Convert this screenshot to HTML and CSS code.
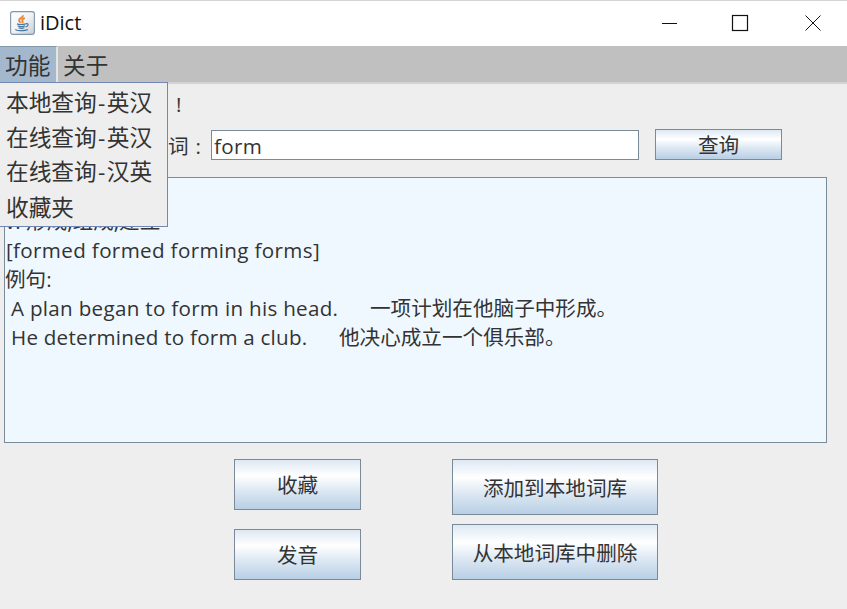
FILE: index.html
```html
<!DOCTYPE html>
<html lang="zh-CN">
<head>
<meta charset="utf-8">
<title>iDict</title>
<link rel="stylesheet" href="styles.css">
</head>
<body>
<div class="window">
  <header class="titlebar">
    <svg class="logo" width="25" height="24" viewBox="0 0 25 24">
      <defs><linearGradient id="tile" x1="0" y1="0" x2="1" y2="1"><stop offset="0" stop-color="#fff"/><stop offset=".5" stop-color="#f0f2f5"/><stop offset="1" stop-color="#c3ccd5"/></linearGradient></defs>
      <rect x=".6" y=".6" width="23.8" height="22.8" rx="2.5" fill="url(#tile)" stroke="#8295aa" stroke-width="1.1"/>
      <path d="M13 4.200c.5 2.300-4.200 2.900-4 5.200 .1 1.100 1.300 1.800 1.900 2.400M14.800 7c-2.200.8-3.200 1.700-2.300 2.900.5.700.3 1.300-.3 2" fill="none" stroke="#e8893c" stroke-width="1.900"/>
      <path d="M7 12.900c2 .8 6 .6 8.800-.1M7.800 14.900c2 .8 5.500.7 7.200 0M8.600 16.800c1.700.6 4.200.6 5.800 0M15.800 12.800c3-.8 3.200 2.200-.3 3.200M5.800 18.300c-1 1.600 9.500 1.900 12 .1" fill="none" stroke="#4a789e" stroke-width="1.200"/>
    </svg>
    <h1 class="title">iDict</h1>
    <svg class="controls" width="162" height="20" viewBox="0 0 162 20" fill="none" stroke="#111">
      <path d="M2 10.500h15"/>
      <rect x="72.500" y="2.500" width="15" height="15" stroke-width="1.200"/>
      <path d="M145.500 2.500l15 15M160.500 2.500l-15 15"/>
    </svg>
  </header>
  <nav class="menubar">
    <div class="menu open"><span>功能</span>
      <ul class="dropdown">
        <li>本地查询<span class="dash">-</span>英汉</li>
        <li>在线查询<span class="dash">-</span>英汉</li>
        <li>在线查询<span class="dash">-</span>汉英</li>
        <li>收藏夹</li>
      </ul>
    </div>
    <div class="menu"><span>关于</span></div>
  </nav>
  <main class="content">
    <p class="greeting">!</p>
    <form class="search">
      <label class="label" for="word">词<span class="colon">:</span></label>
      <input class="field" id="word" type="text" value="form">
      <button class="button find" type="button">查询</button>
    </form>
    <section class="result">
      <p class="line">v. 形成,组成,建立</p>
      <p class="line english">[formed formed forming forms]</p>
      <p class="line">例句:</p>
      <p class="line example"><span class="first">A plan began to form in his head.</span><span>一项计划在他脑子中形成。</span></p>
      <p class="line example"><span class="second">He determined to form a club.</span><span>他决心成立一个俱乐部。</span></p>
    </section>
    <div class="actions">
      <div class="column narrow">
        <button class="button" type="button">收藏</button>
        <button class="button" type="button">发音</button>
      </div>
      <div class="column wide">
        <button class="button" type="button">添加到本地词库</button>
        <button class="button" type="button">从本地词库中删除</button>
      </div>
    </div>
  </main>
</div>
</body>
</html>
```
FILE: styles.css
```css
* { box-sizing: border-box; }
body { margin: 0; }
p, h1, ul { margin: 0; padding: 0; }

.window {
  width: 847px;
  height: 609px;
  overflow: hidden;
  background: #eee;
  color: #333;
  font: 20.6px/29px "Open Sans", "Noto Sans CJK SC", sans-serif;
}

.titlebar {
  height: 46px;
  display: flex;
  align-items: center;
  padding: 0 25px 0 10px;
  background: #fff;
  border-top: 1px solid #d5d5d5;
}
.logo { margin-top: -2px; }
.title { margin: -2px 0 0 5px; font-size: 20px; font-weight: 400; color: #111; }
.controls { margin: -1px 0 0 auto; }

.menubar {
  height: 38px;
  display: flex;
  background: #c0c0c0;
  border-bottom: 2px solid #d3d3d3;
  font-size: 22.7px;
  line-height: 39px;
}
.menu { position: relative; height: 36px; padding-left: 5px; }
.menu.open { width: 58px; line-height: 37px; background: #a3b8cc; border-right: 2px solid #e2e5e8; border-top: 1px solid #8498aa; }
.dropdown {
  position: absolute;
  z-index: 2;
  top: 35px;
  left: 0;
  width: 168px;
  height: 145px;
  padding: 2px 0 0 6px;
  list-style: none;
  background: #eee;
  border: solid #7188b5;
  border-width: 1px 1px 1px 0;
}
.dropdown li { height: 34.7px; line-height: 35px; white-space: nowrap; }
.dropdown li:last-child { padding-top: 1px; }
.dash { display: inline-block; width: 10px; text-align: center; }

.greeting { height: 44px; padding: 6px 0 0 176px; }
.search { height: 49px; display: flex; align-items: flex-start; padding: 2px 0 0 168px; }
.label { width: 43px; line-height: 32px; }
.colon { margin-left: 7px; }
.field {
  width: 428px;
  height: 30px;
  padding: 2px 0 0 2px;
  border: 1px solid #7a8a99;
  background: #fff;
  color: #333;
  font: inherit;
  letter-spacing: .32px;
}
.button {
  display: flex;
  align-items: center;
  justify-content: center;
  padding: 0;
  border: 1px solid #7a8a99;
  background: linear-gradient(#dde8f3, #fff 32%, #dde8f3 62%, #b8cfe5);
  color: #333;
  font: inherit;
  white-space: nowrap;
}
.find { width: 127px; height: 31px; margin: -1px 0 0 16px; padding-top: 2px; }

.result {
  width: 823px;
  height: 266px;
  margin-left: 4px;
  padding: 29px 0 0;
  border: 1px solid #7a8a99;
  background: #eff8ff;
  white-space: nowrap;
}
.line { height: 29px; }
.english { padding-left: 1px; letter-spacing: .35px; }
.example { display: flex; height: 28.5px; padding-left: 6px; }
.first { width: 359px; letter-spacing: .3px; }
.second { width: 328px; letter-spacing: .23px; }

.actions { display: flex; gap: 91px; padding: 16px 0 0 234px; }
.column { display: flex; flex-direction: column; }
.narrow { width: 127px; gap: 19px; }
.narrow .button { height: 51px; padding-top: 1px; }
.wide { width: 206px; gap: 9px; }
.wide .button { height: 56px; padding-top: 2px; }
```
